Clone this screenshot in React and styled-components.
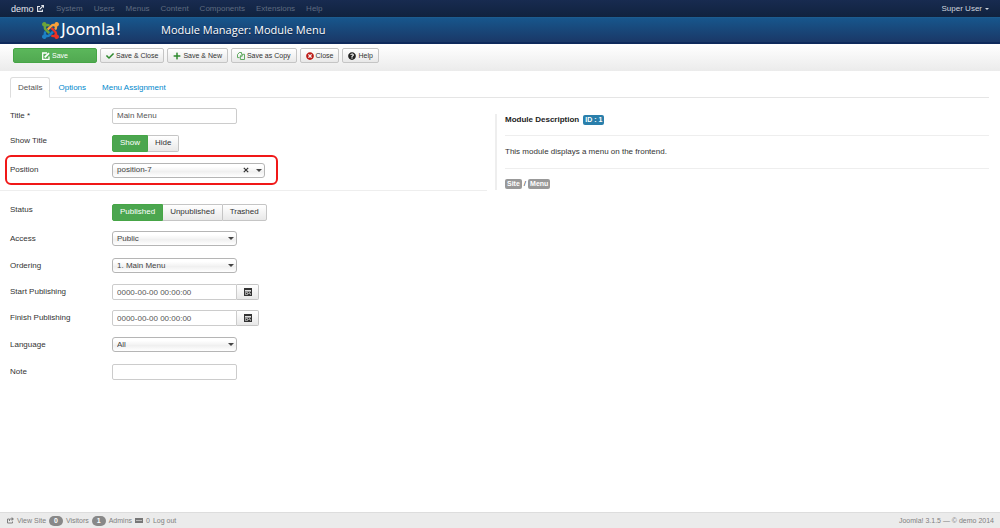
import React from 'react'
import styled, { createGlobalStyle, css } from 'styled-components'
import { FaCheck, FaPlus, FaTimesCircle, FaQuestionCircle } from 'react-icons/fa'

const GlobalStyle = createGlobalStyle`
  * {
    box-sizing: border-box;
  }
  body {
    margin: 0;
    background: #fff;
    color: #333;
    font: 8px/12px 'Liberation Sans', Arial, sans-serif;
  }
  button,
  input,
  select {
    font: inherit;
    color: inherit;
    margin: 0;
  }
  a {
    color: inherit;
    text-decoration: none;
  }
`

const Page = styled.div`
  display: flex;
  flex-direction: column;
  min-height: 100vh;
`

const NavBar = styled.nav`
  display: flex;
  align-items: center;
  height: 17px;
  padding: 0 11px;
  background: linear-gradient(#182b50, #10223e);
  color: #5f6b80;
`

const Brand = styled.a`
  display: flex;
  align-items: center;
  gap: 3px;
  width: 45px;
  color: #e6e9ef;
  font-size: 9px;
`

const NavMenu = styled.div`
  display: flex;
  gap: 11px;
`

const UserMenu = styled.a`
  display: flex;
  align-items: center;
  gap: 3px;
  margin-left: auto;
  color: #d0d5de;
`

const Caret = styled.span`
  border: ${props => (props.$large ? 3 : 2)}px solid transparent;
  border-top-color: currentColor;
  border-bottom: 0;
`

const Header = styled.header`
  display: flex;
  align-items: center;
  height: 27px;
  padding-left: 42px;
  border-top: 1px solid #1c5c8f;
  border-bottom: 2px solid #0e2a5c;
  background: linear-gradient(#17568c, #1a3867);
  color: #fff;
`

const Logo = styled.a`
  display: flex;
  align-items: center;
  gap: 2px;
  width: 119px;
  height: 22px;
  font: 16px/20px 'DejaVu Sans', sans-serif;
  svg {
    width: 17px;
    height: 17px;
  }
`

const PageTitle = styled.h1`
  margin: 0;
  font: 11px/20px 'Open Sans', sans-serif;
  text-shadow: 0 1px 1px #0d2347;
`

const Toolbar = styled.div`
  display: flex;
  gap: 3px;
  height: 27px;
  padding: 4px 13px;
  background: linear-gradient(#fff, #ebebeb);
`

const buttonFace = css`
  border: 1px solid #c5c5c5;
  background: linear-gradient(#fff, #e8e8e8);
`

const greenFace = css`
  border: 1px solid #46a546;
  background: #4ba64f;
  color: #fff;
`

const ToolButton = styled.button`
  display: flex;
  align-items: center;
  justify-content: center;
  gap: 2px;
  height: 15px;
  padding: 0 5px;
  border-radius: 2px;
  font-size: 7px;
  white-space: nowrap;
  ${buttonFace}
  ${props =>
    props.$primary &&
    css`
      width: 84px;
      ${greenFace}
      background: linear-gradient(#5bb75b, #51a951);
    `}
  svg {
    width: 8px;
    height: 8px;
    color: ${props => props.$tint};
  }
`

const Tabs = styled.div`
  display: flex;
  height: 21px;
  margin: 6px 11px 2px 10px;
  border-bottom: 1px solid #e5e5e5;
`

const Tab = styled.button`
  height: 21px;
  padding: 0 7px;
  border: 1px solid transparent;
  border-radius: 3px 3px 0 0;
  background: none;
  color: #0088cc;
  ${props =>
    props.$active &&
    css`
      border-color: #ddd;
      border-bottom-color: #fff;
      background: #fff;
      color: #555;
    `}
`

const Main = styled.main`
  display: grid;
  grid-template-columns: 487px 1fr;
  align-items: start;
  flex: 1;
  padding-right: 11px;
  gap: 8px;
`

const Row = styled.div`
  display: flex;
  align-items: center;
  height: ${props => props.$height || 27}px;
  padding-left: 10px;
`

const Label = styled.label`
  width: 102px;
`

const GroupLabel = styled.span`
  width: 102px;
  padding-bottom: 5px;
`

const TextInput = styled.input`
  width: 125px;
  height: 16px;
  padding: 0 4px;
  border: 1px solid #ccc;
  border-radius: ${props => (props.$joined ? '2px 0 0 2px' : '2px')};
  background: #fff;
  color: #555;
`

const HighlightRow = styled(Row)`
  width: 273px;
  height: 30px;
  margin: 0 0 5px 5px;
  padding-left: 3px;
  border: 2px solid #f01818;
  border-radius: 6px;
`

const SelectBox = styled.div`
  display: flex;
  align-items: center;
  gap: 7px;
  width: ${props => props.$width || 125}px;
  height: 15px;
  padding-right: 2px;
  border: 1px solid #b5b5b5;
  border-radius: 3px;
  background: linear-gradient(#fff 20%, #f4f4f4 50%, #eee 52%, #fff);
  color: #444;
`

const Select = styled.select`
  appearance: none;
  flex: 1;
  min-width: 0;
  height: 13px;
  padding: 0 4px;
  border: 0;
  background: none;
`

const ClearButton = styled.button`
  display: flex;
  padding: 0;
  border: 0;
  background: none;
`

const ButtonGroup = styled.div`
  display: flex;
`

const Choice = styled.button`
  height: 17px;
  padding: 0 7px;
  white-space: nowrap;
  ${buttonFace}
  ${props => props.$active && greenFace}
  & + & {
    border-left-width: 0;
  }
  & + & + & {
    border-left-width: 1px;
  }
  &:first-child {
    border-radius: 2px 0 0 2px;
  }
  &:last-child {
    border-radius: 0 2px 2px 0;
  }
  &:not(:first-child):not(:last-child) {
    border-right-width: 0;
  }
`

const CalendarButton = styled.button`
  display: flex;
  align-items: center;
  justify-content: center;
  width: 22px;
  height: 16px;
  padding: 0;
  ${buttonFace}
  border-left: 0;
  border-radius: 0 2px 2px 0;
`

const Divider = styled.hr`
  width: 100%;
  height: 1px;
  margin: 0;
  border: 0;
  background: #eee;
`

const Fieldset = styled.div`
  padding-top: 8px;
`

const Description = styled.section`
  margin-top: 14px;
  padding-left: 8px;
  border-left: 2px solid #eee;
`

const DescriptionTitle = styled.h2`
  display: flex;
  align-items: center;
  gap: 4px;
  height: 21px;
  padding-bottom: 9px;
  margin: 0;
  font-size: 8px;
  color: #222;
`

const DescriptionText = styled.p`
  margin: 0;
  padding: 10px 0;
`

const Tags = styled.div`
  display: flex;
  align-items: center;
  gap: 2px;
  padding-top: 9px;
`

const Badge = styled.span`
  height: 10px;
  padding: 0 2px;
  border-radius: 2px;
  background: ${props => props.$color || '#999'};
  color: #fff;
  font-size: 7px;
  line-height: 10px;
  font-weight: bold;
`

const Footer = styled.footer`
  display: flex;
  align-items: center;
  justify-content: space-between;
  height: 16px;
  padding: 0 6px 0 7px;
  border-top: 1px solid #ddd;
  background: #ebebeb;
  color: #808080;
  font-size: 7px;
`

const StatusItems = styled.div`
  display: flex;
  align-items: center;
  gap: 3px;
`

const Count = styled.span`
  height: 10px;
  padding: 0 5px;
  border-radius: 5px;
  background: #888;
  color: #fff;
  line-height: 10px;
  font-weight: bold;
`

const JoomlaMark = () => (
  <svg viewBox="0 32 448 448" aria-hidden="true">
    <path
      fill="#6ba43a"
      d="M.6 92.1C.6 58.8 27.4 32 60.4 32c30 0 54.5 21.9 59.2 50.2 32.6-7.6 67.1.6 96.5 30l-44.3 44.3c-20.5-20.5-42.6-16.3-55.4-3.5-14.3 14.3-14.3 37.9 0 52.2l99.5 99.5-44 44.3c-87.7-87.2-49.7-49.7-99.8-99.7-26.8-26.5-35-64.8-24.8-98.9C20.4 144.6.6 120.7.6 92.1z"
    />
    <path
      fill="#f9a13a"
      d="M130.1 208.5l44.3 44.3c10-10 89.7-89.7 99.7-99.8 14.3-14.3 37.6-14.3 51.9 0 12.8 12.8 17 35-3.5 55.4l44 44.3c31.2-31.2 38.5-67.6 28.9-101.2 29.2-4.1 51.9-29.2 51.9-59.5 0-33.2-26.8-60.1-59.8-60.1-30.3 0-55.4 22.5-59.5 51.6-33.8-9.9-71.7-1.5-98.3 25.1-18.3 19.1-71.1 71.5-99.6 99.9z"
    />
    <path
      fill="#ee3124"
      d="M396.4 360.7c8.2-32.7-.9-68.5-26.3-93.9-11.8-12.2 5 4.7-99.5-99.7l-44.3 44.3 99.7 99.7c14.3 14.3 14.3 37.6 0 51.9-12.8 12.8-35 17-55.4-3.5l-44 44.3c27.6 30.2 68 38.8 102.7 28 5.5 27.4 29.7 48.1 58.9 48.1 33 0 59.8-26.8 59.8-60.1 0-30.2-22.5-55-51.6-59.1z"
    />
    <path
      fill="#1c80c4"
      d="M312.1 307.6l-44-44.3c-87 86.4-50.4 50.4-99.7 99.8-14.3 14.3-37.6 14.3-51.9 0-13.1-13.4-16.9-35.3 3.2-55.4l-44-44.3c-30.2 30.2-38 65.2-29.5 98.3-26.7 6-46.2 29.9-46.2 58.2C0 453.2 26.8 480 59.8 480c28.6 0 52.5-19.8 58.6-46.7 32.7 8.2 68.5-.6 94.2-26 32.1-32 12.2-12.4 99.5-99.7z"
    />
  </svg>
)

const ExternalIcon = () => (
  <svg width="7" height="7" viewBox="0 0 7 7" fill="none" stroke="currentColor" aria-hidden="true">
    <path d="M3 1.5H.6v4.9h4.8V4.5" strokeWidth="1.1" />
    <path d="M2.6 4.4l3-3" strokeWidth="1.3" />
    <path d="M3.8 0H7v3.2z" fill="currentColor" stroke="none" />
  </svg>
)

const ShareIcon = () => (
  <svg width="7" height="7" viewBox="0 0 7 7" fill="none" stroke="currentColor" aria-hidden="true">
    <path d="M2 2H.5v4h5V4.5" />
    <path d="M2.5 4V2H5" />
    <path d="M4.6 0L7 2 4.6 4z" fill="currentColor" stroke="none" />
  </svg>
)

const SaveIcon = () => (
  <svg viewBox="0 0 8 8" fill="none" stroke="currentColor" aria-hidden="true">
    <path d="M5 1H.7v6.3H7V4.4" strokeWidth="1.3" />
    <path d="M2.7 5.4L7 1.1" strokeWidth="1.8" />
  </svg>
)

const CopyIcon = () => (
  <svg viewBox="0 0 8 8" fill="none" stroke="currentColor" strokeWidth=".9" aria-hidden="true">
    <path d="M2.6 5.6H.5v-3L2.3.5h2.2v1.6" />
    <path d="M3.4 4l1.7-1.7h2.4v5.2H3.4z" />
    <path d="M3.4 4.2h1.8V2.3" />
  </svg>
)

const CalendarIcon = () => (
  <svg width="8" height="8" viewBox="0 0 8 8" aria-hidden="true">
    <path fill="#333" d="M0 0h8v8H0z" />
    <path fill="#ddd" d="M1 2h6v1H1z" />
    <path fill="#999" d="M1 3h6v4H1z" />
    <path fill="#333" d="M2 5h1v1H2zM4 4h1v1H4zM6 4h1v1H6zM4 6h2v1H4z" />
  </svg>
)

const CrossIcon = () => (
  <svg width="6" height="6" viewBox="0 0 6 6" aria-hidden="true">
    <path d="M.8.8l4.4 4.4M5.2.8L.8 5.2" stroke="#333" strokeWidth="1.2" />
  </svg>
)

const MessageIcon = () => (
  <svg width="8" height="6" viewBox="0 0 8 6" aria-hidden="true">
    <path fill="#777" d="M0 0h8v5H0z" />
    <path fill="#bbb" d="M1 2h6v1H1z" />
  </svg>
)

const menus = ['System', 'Users', 'Menus', 'Content', 'Components', 'Extensions', 'Help']

const SelectField = ({ id, label, value }) => (
  <Row>
    <Label htmlFor={id}>{label}</Label>
    <SelectBox>
      <Select id={id} defaultValue={value}>
        <option>{value}</option>
      </Select>
      <Caret $large />
    </SelectBox>
  </Row>
)

const DateField = ({ id, label }) => (
  <Row $height={26}>
    <Label htmlFor={id}>{label}</Label>
    <TextInput id={id} $joined defaultValue="0000-00-00 00:00:00" />
    <CalendarButton aria-label={`${label} calendar`}>
      <CalendarIcon />
    </CalendarButton>
  </Row>
)

const App = () => (
  <Page>
    <GlobalStyle />
    <NavBar>
      <Brand href="#">
        demo <ExternalIcon />
      </Brand>
      <NavMenu>
        {menus.map(item => (
          <a href="#" key={item}>
            {item}
          </a>
        ))}
      </NavMenu>
      <UserMenu href="#">
        Super User <Caret />
      </UserMenu>
    </NavBar>
    <Header>
      <Logo href="#">
        <JoomlaMark />
        Joomla!
      </Logo>
      <PageTitle>Module Manager: Module Menu</PageTitle>
    </Header>
    <Toolbar>
      <ToolButton $primary $tint="#fff">
        <SaveIcon /> Save
      </ToolButton>
      <ToolButton $tint="#2f8a2f">
        <FaCheck /> Save &amp; Close
      </ToolButton>
      <ToolButton $tint="#2f8a2f">
        <FaPlus /> Save &amp; New
      </ToolButton>
      <ToolButton $tint="#51a351">
        <CopyIcon /> Save as Copy
      </ToolButton>
      <ToolButton $tint="#bd1a16">
        <FaTimesCircle /> Close
      </ToolButton>
      <ToolButton $tint="#222">
        <FaQuestionCircle /> Help
      </ToolButton>
    </Toolbar>
    <Tabs>
      <Tab $active>Details</Tab>
      <Tab>Options</Tab>
      <Tab>Menu Assignment</Tab>
    </Tabs>
    <Main>
      <div>
        <Row $height={31}>
          <Label htmlFor="title">Title *</Label>
          <TextInput id="title" defaultValue="Main Menu" />
        </Row>
        <Row $height={24}>
          <GroupLabel id="show-title">Show Title</GroupLabel>
          <ButtonGroup role="group" aria-labelledby="show-title">
            <Choice $active>Show</Choice>
            <Choice>Hide</Choice>
          </ButtonGroup>
        </Row>
        <HighlightRow>
          <Label htmlFor="position">Position</Label>
          <SelectBox $width={153}>
            <Select id="position" defaultValue="position-7">
              <option>position-7</option>
            </Select>
            <ClearButton aria-label="Clear position">
              <CrossIcon />
            </ClearButton>
            <Caret $large />
          </SelectBox>
        </HighlightRow>
        <Divider />
        <Fieldset>
          <Row $height={26}>
            <GroupLabel id="status">Status</GroupLabel>
            <ButtonGroup role="group" aria-labelledby="status">
              <Choice $active>Published</Choice>
              <Choice>Unpublished</Choice>
              <Choice>Trashed</Choice>
            </ButtonGroup>
          </Row>
          <SelectField id="access" label="Access" value="Public" />
          <SelectField id="ordering" label="Ordering" value="1. Main Menu" />
          <DateField id="start" label="Start Publishing" />
          <DateField id="finish" label="Finish Publishing" />
          <SelectField id="language" label="Language" value="All" />
          <Row>
            <Label htmlFor="note">Note</Label>
            <TextInput id="note" />
          </Row>
        </Fieldset>
      </div>
      <Description>
        <DescriptionTitle>
          Module Description <Badge $color="#2a7fab">ID : 1</Badge>
        </DescriptionTitle>
        <Divider />
        <DescriptionText>This module displays a menu on the frontend.</DescriptionText>
        <Divider />
        <Tags>
          <Badge>Site</Badge>/<Badge>Menu</Badge>
        </Tags>
      </Description>
    </Main>
    <Footer>
      <StatusItems>
        <ShareIcon /> <a href="#">View Site</a>
        <Count>0</Count> Visitors
        <Count>1</Count> Admins
        <MessageIcon /> 0 <a href="#">Log out</a>
      </StatusItems>
      <span>Joomla! 3.1.5 — © demo 2014</span>
    </Footer>
  </Page>
)

export default App
